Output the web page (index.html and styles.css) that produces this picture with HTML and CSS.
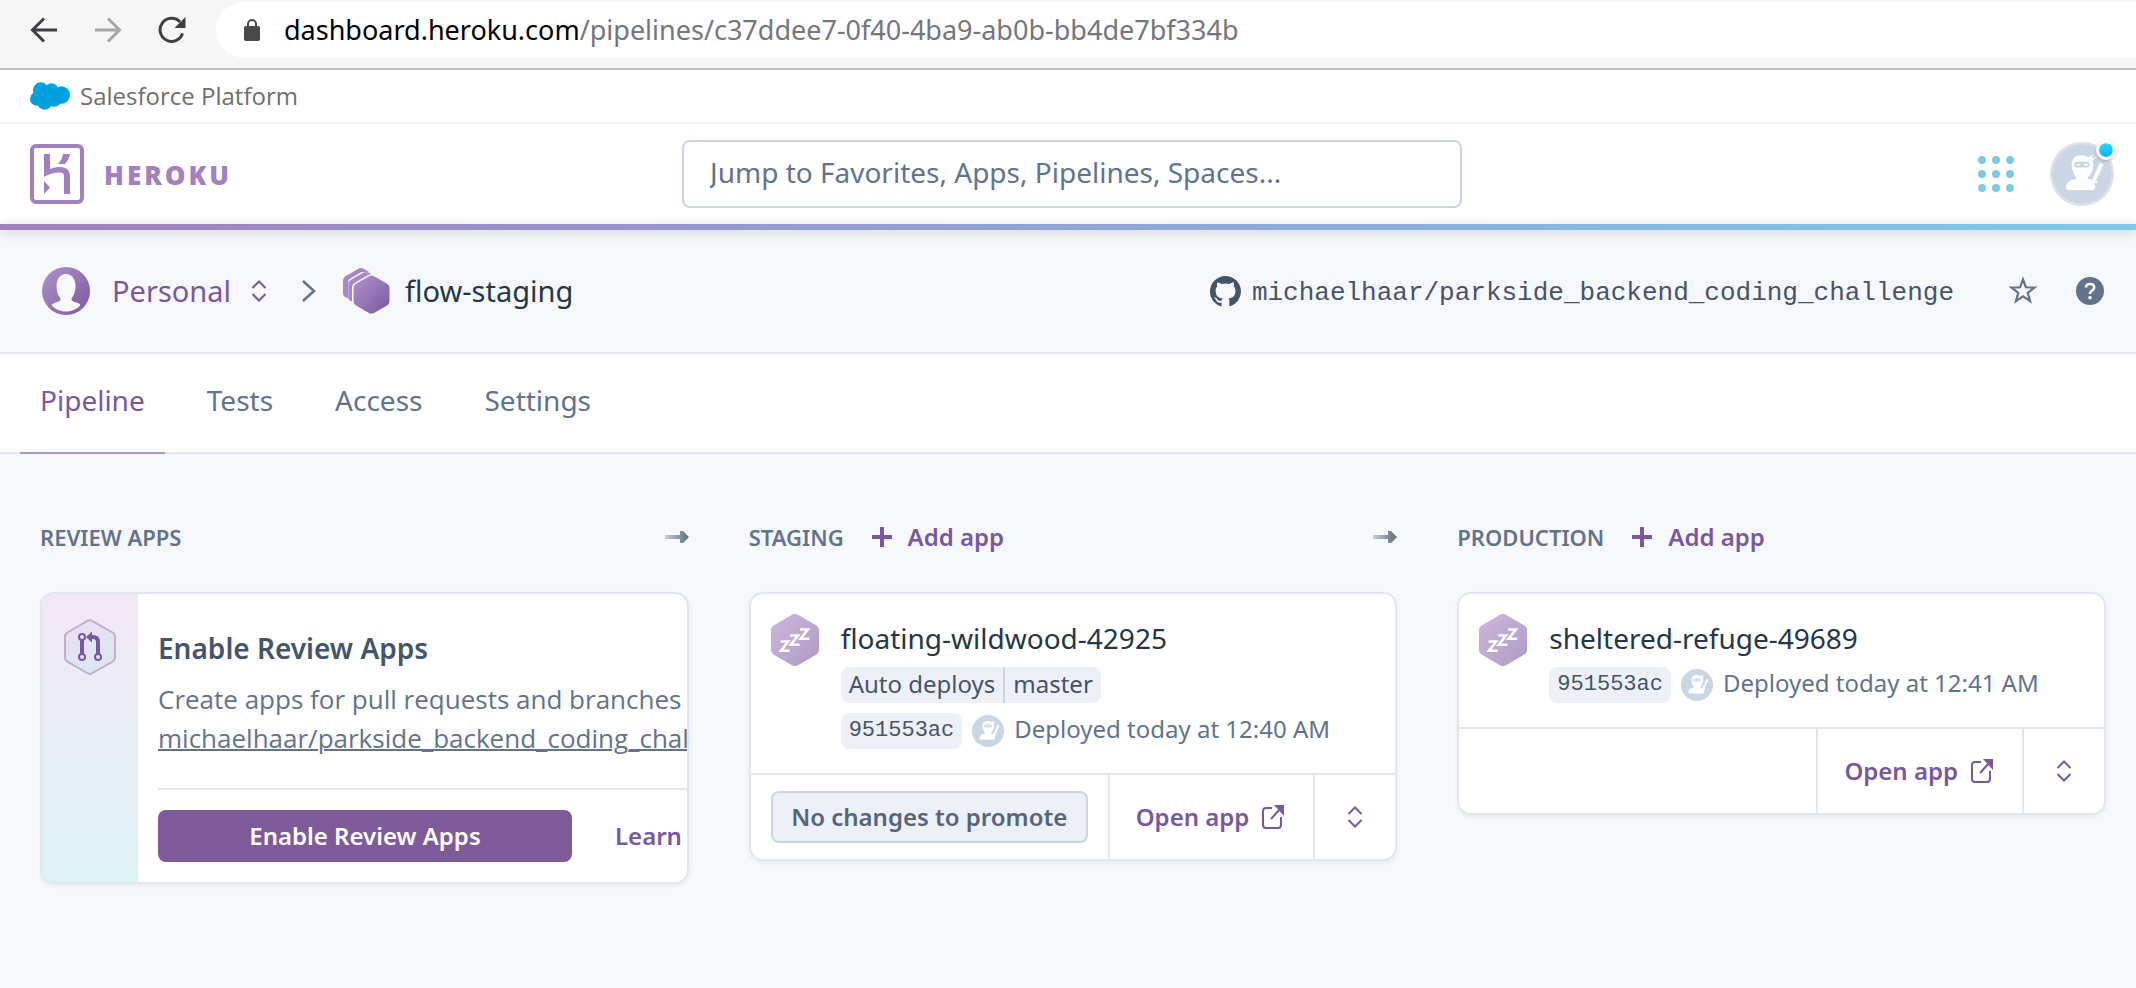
FILE: index.html
```html
<!DOCTYPE html>
<html lang="en">
<head>
<meta charset="utf-8">
<title>flow-staging | Heroku</title>
<link rel="stylesheet" href="styles.css">
</head>
<body>
<svg class="defs" aria-hidden="true">
  <defs>
    <linearGradient id="purple" x1="0" y1="0" x2="1" y2="1"><stop offset="0" stop-color="#b093cd"/><stop offset="1" stop-color="#79589f"/></linearGradient>
    <linearGradient id="lilac" x1="0" y1="0" x2="1" y2="1"><stop offset="0" stop-color="#ccb8dc"/><stop offset="1" stop-color="#af9ac5"/></linearGradient>
    <linearGradient id="pale" x1="0" y1="0" x2="1" y2="1"><stop offset="0" stop-color="#ecdff2"/><stop offset="1" stop-color="#d9e8f4"/></linearGradient>
    <linearGradient id="fade" x1="0" y1="0" x2="1" y2="0"><stop offset="0" stop-color="#5f6b7c" stop-opacity=".3"/><stop offset="1" stop-color="#5f6b7c"/></linearGradient>
    <symbol id="ninja" viewBox="0 0 64 64">
      <circle cx="32" cy="32" r="32" fill="#cbd6e5"/>
      <path fill="#fff" d="M15 46c0-5 4-8 11-9v-1c-3-4-5-9-5-14 0-7 5-10 11-10 3 0 5 1 7 2l5-3-2 4 5-1-4 4c1 1 1 3 1 4 0 5-2 10-6 14v1c2 0 4 1 5 1l8-18 4 2-8 17 2 1-1 2-2-1-1 2c1 1 1 2 1 4 0 1-1 2-2 2H17c-1 0-2-1-2-2z"/>
      <rect x="24" y="19" width="16" height="6" rx="3" fill="#cbd6e5"/>
      <ellipse cx="28" cy="22" rx="2" ry="1" fill="#fff"/><ellipse cx="36" cy="22" rx="2" ry="1" fill="#fff"/>
    </symbol>
    <symbol id="updown" viewBox="0 0 16 22"><path d="M1.500 8 8 1.500 14.500 8M1.500 14 8 20.500 14.500 14" fill="none" stroke="currentColor" stroke-width="2"/></symbol>
    <symbol id="external" viewBox="0 0 24 26"><path d="M11 4H5a3 3 0 0 0-3 3v14a3 3 0 0 0 3 3h12a3 3 0 0 0 3-3V13M10 15 19 5" fill="none" stroke="currentColor" stroke-width="2"/><path d="M13 1h10v11z" fill="currentColor"/></symbol>
    <symbol id="arrow" viewBox="0 0 24 14"><path d="M0 5h15V1l3 0 6 6-6 6-3 0V9H0z" fill="url(#fade)"/></symbol>
    <symbol id="plus" viewBox="0 0 20 20"><path d="M8 0h4v8h8v4h-8v8H8v-8H0V8h8z" fill="currentColor"/></symbol>
    <symbol id="sleep" viewBox="0 0 48 52">
      <path d="M21 .8a6 6 0 0 1 6 0l18 10.500a6 6 0 0 1 3 5.200v19a6 6 0 0 1-3 5.200L27 51.200a6 6 0 0 1-6 0L3 40.700a6 6 0 0 1-3-5.200v-19a6 6 0 0 1 3-5.200z" fill="url(#lilac)"/>
      <path d="M9.500 27.500h7.700L10 36.700h8.700M19.300 21.500H27l-7.200 9.200h8.700M29.100 15.500h7.700l-7.200 9.200h8.700" fill="none" stroke="#fff" stroke-width="2.600"/>
    </symbol>
    <path id="hex" d="M15.500.8a5 5 0 0 1 5 0l13 7.500A5 5 0 0 1 36 12.600v13a5 5 0 0 1-2.500 4.300l-13 7.500a5 5 0 0 1-5 0l-13-7.500A5 5 0 0 1 0 25.600v-13a5 5 0 0 1 2.500-4.300z"/>
    <clipPath id="left"><path d="M0 0h48v14L11 33 0 28z"/></clipPath>
  </defs>
</svg>

<div class="browser">
  <button class="nav" aria-label="Back"><svg width="28" height="28" viewBox="0 0 28 28"><path d="M27 14H3M14 2.500 2.500 14 14 25.500" fill="none" stroke="#3d3f42" stroke-width="3"/></svg></button>
  <button class="nav" aria-label="Forward"><svg width="28" height="28" viewBox="0 0 28 28"><path d="M1 14h24M14 2.500 25.500 14 14 25.500" fill="none" stroke="#a5a6a8" stroke-width="3"/></svg></button>
  <button class="nav" aria-label="Reload"><svg width="28" height="28" viewBox="0 0 28 28"><path d="M24.500 17.500A11.500 11.500 0 1 1 22 6" fill="none" stroke="#3d3f42" stroke-width="3"/><path d="M27.500 1v11h-11z" fill="#3d3f42"/></svg></button>
  <div class="address">
    <svg width="16" height="22" viewBox="0 0 16 22"><path d="M4 9V5a4 4 0 0 1 8 0v4" fill="none" stroke="#4a4a4a" stroke-width="2"/><rect y="7" width="16" height="15" rx="2" fill="#4a4a4a"/></svg>
    <span class="url"><span class="host">dashboard.heroku.com</span>/pipelines/c37ddee7-0f40-4ba9-ab0b-bb4de7bf334b</span>
  </div>
</div>

<div class="platform">
  <svg width="40" height="28" viewBox="0 0 41 28"><g fill="#00a1e0"><circle cx="11" cy="8" r="8"/><circle cx="22" cy="8" r="7"/><circle cx="32" cy="13" r="9"/><circle cx="7" cy="17" r="7"/><circle cx="15" cy="20" r="8"/><circle cx="25" cy="18" r="7"/></g></svg>
  <span>Salesforce Platform</span>
</div>

<header class="header">
  <a class="brand" href="#" aria-label="Heroku">
    <svg width="54" height="60" viewBox="0 0 54 60"><rect x="2" y="2" width="50" height="56" rx="4" fill="none" stroke="#a181bf" stroke-width="4"/><path fill="#a181bf" d="M14 10h6v15c4-1.500 7-2 10-2 7 0 10 4 10 9v18h-6V32c0-2-1-3.500-4-3.500-6 0-12 2-16 4.500zM14 37l6 6.500-6 6.500zM33 10h7c-.5 4-2.500 7-5 10h-7c2.500-3 4.500-6 5-10z"/></svg>
    <span>HEROKU</span>
  </a>
  <input class="search" type="text" aria-label="Search" placeholder="Jump to Favorites, Apps, Pipelines, Spaces...">
  <div class="account">
    <button class="plain" aria-label="Apps"><svg width="36" height="36" viewBox="0 0 36 36"><g fill="#7fc9e6"><circle cx="4" cy="4" r="4"/><circle cx="18" cy="4" r="4"/><circle cx="32" cy="4" r="4"/><circle cx="4" cy="18" r="4"/><circle cx="18" cy="18" r="4"/><circle cx="32" cy="18" r="4"/><circle cx="4" cy="32" r="4"/><circle cx="18" cy="32" r="4"/><circle cx="32" cy="32" r="4"/></g></svg></button>
    <button class="plain avatar" aria-label="Account"><svg width="60" height="60"><use href="#ninja"/></svg><i class="dot"></i></button>
  </div>
</header>
<div class="rainbow"></div>

<section class="context">
  <button class="plain owner">
    <svg width="48" height="48" viewBox="0 0 48 48"><circle cx="24" cy="24" r="24" fill="url(#purple)"/><path fill="#f7f8fc" d="M24 7c6 0 9.500 5 9.500 12 0 6-2 10-4 12.500 0 2 .5 2.500 3 3.500 3 .8 5 1.500 6 3-3 4-8.500 6.500-14.500 6.500S12.500 42 9.500 38c1-1.500 3-2.200 6-3 2.500-1 3-1.500 3-3.500-2-2.500-4-6.500-4-12.500 0-7 3.500-12 9.500-12z"/></svg>
    <span>Personal</span>
    <svg width="16" height="22"><use href="#updown"/></svg>
  </button>
  <svg class="chevron" width="16" height="22" viewBox="0 0 16 22"><path d="M2 1l11 10L2 21" fill="none" stroke="#62738d" stroke-width="2.500"/></svg>
  <svg width="47" height="46" viewBox="0 0 47 46">
    <g fill="#a788c6" stroke="#f7f8fc" stroke-width="3" paint-order="stroke">
      <g clip-path="url(#left)"><use href="#hex"/></g>
      <g transform="translate(5.200 3.800)"><g clip-path="url(#left)"><use href="#hex"/></g></g>
      <use href="#hex" x="10.500" y="7.500" fill="url(#purple)"/>
    </g>
  </svg>
  <h1 class="name">flow-staging</h1>
  <a class="repo" href="#">
    <svg width="31" height="31" viewBox="0 0 16 16"><path fill="#45546b" d="M8 0C3.580 0 0 3.580 0 8c0 3.540 2.290 6.530 5.470 7.590.4.070.55-.17.55-.38 0-.19-.01-.82-.01-1.490-2.010.37-2.530-.49-2.690-.94-.09-.23-.48-.94-.82-1.130-.28-.15-.68-.52-.01-.53.63-.01 1.080.58 1.230.82.72 1.210 1.870.87 2.330.66.07-.52.28-.87.51-1.070-1.780-.2-3.640-.89-3.640-3.950 0-.87.31-1.590.82-2.150-.08-.2-.36-1.020.08-2.120 0 0 .67-.21 2.200.82.64-.18 1.320-.27 2-.27s1.360.09 2 .27c1.530-1.040 2.200-.82 2.200-.82.44 1.100.16 1.920.08 2.120.51.56.82 1.270.82 2.150 0 3.070-1.870 3.750-3.650 3.950.29.25.54.73.54 1.480 0 1.070-.01 1.930-.01 2.200 0 .21.15.46.55.38A8.010 8.010 0 0 0 16 8c0-4.420-3.580-8-8-8z"/></svg>
    <span>michaelhaar/parkside_backend_coding_challenge</span>
  </a>
  <button class="plain star" aria-label="Favorite"><svg width="30" height="30" viewBox="0 0 30 30"><path d="M15 3.500l2.900 7.800 8.600.3-6.800 5.200 2.400 8.400-7.100-4.900-7.100 4.900 2.400-8.400L3.500 11.600l8.600-.3z" fill="none" stroke="#62738d" stroke-width="2.200"/></svg></button>
  <button class="plain help" aria-label="Help"><svg width="28" height="28" viewBox="0 0 28 28"><circle cx="14" cy="14" r="14" fill="#62738d"/><path d="M10 10.500c0-2.400 1.800-3.500 4-3.500s4.200 1.200 4.200 3.500c0 3-4.200 3-4.200 6.500" fill="none" stroke="#fff" stroke-width="2.600"/><circle cx="14" cy="20.800" r="1.800" fill="#fff"/></svg></button>
</section>

<nav class="tabs">
  <a class="tab active" href="#">Pipeline</a>
  <a class="tab" href="#">Tests</a>
  <a class="tab" href="#">Access</a>
  <a class="tab" href="#">Settings</a>
</nav>

<main class="stages">
  <section class="stage">
    <div class="stage-head"><h2>REVIEW APPS</h2><svg class="next" width="24" height="14"><use href="#arrow"/></svg></div>
    <article class="card review">
      <div class="strip"><svg width="54" height="60" viewBox="0 0 54 60"><path d="M24 3.200a5 5 0 0 1 5.500 0L49.500 14.500a5 5 0 0 1 2.500 4.300v20.500a5 5 0 0 1-2.500 4.300L29.500 55a5 5 0 0 1-5.500 0L4.500 43.600A5 5 0 0 1 2 39.300V18.800a5 5 0 0 1 2.500-4.300z" fill="url(#pale)" stroke="#c0b0d0" stroke-width="2"/><g fill="none" stroke="#79589f"><circle cx="19" cy="19" r="3" stroke-width="2"/><circle cx="19" cy="39" r="3" stroke-width="2"/><circle cx="35" cy="39" r="3" stroke-width="2"/><path d="M19 22v14M35 36V24q0-5-5-5h-2" stroke-width="4"/></g><path d="M23 19l6-5.500v11z" fill="#79589f"/></svg></div>
      <div class="review-body">
        <h3>Enable Review Apps</h3>
        <p>Create apps for pull requests and branches on<br><a href="#">michaelhaar/parkside_backend_coding_challenge</a></p>
        <div class="review-actions"><button class="primary">Enable Review Apps</button><a href="#">Learn More</a></div>
      </div>
    </article>
  </section>

  <section class="stage">
    <div class="stage-head"><h2>STAGING</h2><button class="plain add"><svg width="20" height="20"><use href="#plus"/></svg>Add app</button><svg class="next" width="24" height="14"><use href="#arrow"/></svg></div>
    <article class="card">
      <div class="app">
        <svg width="48" height="52"><use href="#sleep"/></svg>
        <div class="info">
          <h3>floating-wildwood-42925</h3>
          <div class="row"><span class="tag">Auto deploys</span><span class="tag">master</span></div>
          <div class="row"><code class="tag">951553ac</code><svg class="who" width="32" height="32"><use href="#ninja"/></svg><span class="when">Deployed today at 12:40 AM</span></div>
        </div>
      </div>
      <div class="foot">
        <div class="promote"><button class="muted" disabled>No changes to promote</button></div>
        <a class="open" href="#">Open app<svg width="24" height="26"><use href="#external"/></svg></a>
        <button class="plain more" aria-label="More"><svg width="16" height="22"><use href="#updown"/></svg></button>
      </div>
    </article>
  </section>

  <section class="stage">
    <div class="stage-head"><h2>PRODUCTION</h2><button class="plain add"><svg width="20" height="20"><use href="#plus"/></svg>Add app</button></div>
    <article class="card">
      <div class="app">
        <svg width="48" height="52"><use href="#sleep"/></svg>
        <div class="info">
          <h3>sheltered-refuge-49689</h3>
          <div class="row"><code class="tag">951553ac</code><svg class="who" width="32" height="32"><use href="#ninja"/></svg><span class="when">Deployed today at 12:41 AM</span></div>
        </div>
      </div>
      <div class="foot">
        <div class="promote"></div>
        <a class="open" href="#">Open app<svg width="24" height="26"><use href="#external"/></svg></a>
        <button class="plain more" aria-label="More"><svg width="16" height="22"><use href="#updown"/></svg></button>
      </div>
    </article>
  </section>
</main>
</body>
</html>
```
FILE: styles.css
```css
* { box-sizing: border-box; }
body { margin: 0; min-height: 100vh; background: #f7f8fc; color: #62738d; font: 24px/32px "Noto Sans", "Open Sans", sans-serif; }
h1, h2, h3, p { margin: 0; font-weight: 400; }
a { text-decoration: none; color: inherit; }
svg { display: block; flex: none; }
button, input { font: inherit; }
.defs { position: absolute; width: 0; height: 0; }
.plain, .nav { border: 0; padding: 0; background: none; color: inherit; display: flex; align-items: center; flex: none; }

.browser { display: flex; align-items: flex-start; height: 70px; padding: 2px 0 0 30px; background: #f6f6f7; border-bottom: 2px solid #bfbfbf; }
.nav { height: 56px; margin-right: 36px; }
.address { flex: 1; display: flex; align-items: center; gap: 24px; height: 56px; margin-left: -6px; padding-left: 28px; border-radius: 28px 0 0 28px; background: #fff; }
.url { color: #74777b; font-size: 27px; line-height: 40px; }
.host { color: #000; }

.platform { display: flex; align-items: center; gap: 10px; height: 54px; padding-left: 30px; background: #fff; border-bottom: 2px solid #edf1f6; color: #706e6b; font-family: "Open Sans", sans-serif; }

.header { display: grid; grid-template-columns: 1fr 780px 1fr; align-items: center; height: 100px; padding: 0 22px 0 30px; background: #fff; }
.brand { display: flex; align-items: center; gap: 20px; color: #a181bf; font: 800 26px/32px "Open Sans", sans-serif; letter-spacing: 3px; }
.brand span { padding-top: 2px; }
.search { height: 68px; width: 100%; padding: 0 26px 4px; border: 2px solid #cbd6e5; border-radius: 8px; background: #fff; font-size: 28px; color: #45546b; }
.search::placeholder { color: #62738d; opacity: 1; }
.account { display: flex; align-items: center; justify-content: flex-end; gap: 36px; }
.avatar { position: relative; border: 2px solid #dfe0e6; border-radius: 50%; }
.dot { position: absolute; top: -4px; right: -4px; width: 20px; height: 20px; border: 3px solid #fff; border-radius: 50%; background: linear-gradient(#2fd6f5, #00b8ff) padding-box; box-shadow: 0 1px 3px #0004; }
.rainbow { height: 6px; background: linear-gradient(90deg, #a37fbd, #7ecae8); box-shadow: 0 2px 12px #0003; }

.context { display: flex; align-items: center; height: 124px; padding: 0 32px 0 42px; border-bottom: 2px solid #e3e8ee; font-size: 29px; line-height: 40px; }
.owner { color: #79589f; }
.owner span { margin: 0 20px 0 22px; }
.chevron { margin: 0 26px 0 34px; }
.name { margin-left: 15px; font-size: 29px; color: #253746; }
.repo { display: flex; align-items: center; gap: 11px; margin-left: auto; color: #45546b; font: 26px/32px "Liberation Mono", monospace; }
.repo span { padding-top: 4px; }
.star { margin-left: 54px; }
.help { margin-left: 38px; }

.tabs { display: flex; height: 100px; padding-left: 20px; background: #fff; border-bottom: 2px solid #e3e8ee; font-size: 28px; line-height: 36px; }
.tab { height: 100px; margin-right: 22px; padding: 28px 20px 0; }
.active { color: #79589f; border-bottom: 2px solid #ab98c1; }

.stages { display: grid; grid-template-columns: repeat(3, minmax(0, 1fr)); gap: 60px; align-items: start; padding: 63px 30px 64px 40px; }
.stage-head { display: flex; align-items: center; height: 40px; margin-bottom: 35px; }
.stage-head h2 { font-size: 22px; font-weight: 600; }
.add { gap: 16px; margin-left: 28px; color: #79589f; font-weight: 600; }
.next { margin-left: auto; }
.card { border: 2px solid #e2e6ee; border-radius: 14px; background: #fff; box-shadow: 0 2px 5px #0000000f; overflow: hidden; }

.review { display: flex; height: 292px; }
.strip { flex: none; width: 96px; padding: 24px 0 0 21px; background: linear-gradient(#f2e8f5, #def3f6); }
.review-body { flex: none; width: 620px; padding: 35px 0 0 20px; white-space: nowrap; }
.review h3 { font-size: 28px; line-height: 38px; font-weight: 600; color: #45546b; }
.review p { margin-top: 13px; font-family: "Open Sans", sans-serif; font-size: 26px; line-height: 39px; }
.review p a { text-decoration: underline; text-decoration-thickness: 2px; }
.review-actions { display: flex; align-items: center; gap: 43px; margin-top: 30px; padding-top: 20px; border-top: 2px solid #e2e6ee; color: #79589f; font-weight: 600; }
.primary { width: 414px; height: 52px; border: 0; border-radius: 8px; background: #7e5a9b; color: #fff; font-weight: 600; }

.app { display: flex; gap: 22px; padding: 20px 20px 24px; }
.info h3 { margin-top: 5px; font-size: 28px; line-height: 38px; color: #253746; }
.row { display: flex; align-items: center; height: 36px; margin-top: 10px; }
.tag { height: 36px; padding: 0 8px; border-radius: 8px; background: #edf0f6; color: #45546b; font-size: 24px; line-height: 34px; }
.tag + .tag { border-left: 2px solid #cbd6e5; border-radius: 0 8px 8px 0; }
.tag:has(+ .tag) { border-radius: 8px 0 0 8px; }
code.tag { font-family: "Liberation Mono", monospace; font-size: 22px; line-height: 36px; }
.who { margin: 0 10px; }
.when { padding-bottom: 4px; }
.foot { display: flex; border-top: 2px solid #e2e6ee; height: 86px; color: #79589f; font-weight: 600; }
.promote { flex: 1; display: flex; align-items: center; padding: 0 20px; }
.muted { flex: 1; height: 52px; padding: 0; border: 2px solid #cbd6e5; border-radius: 8px; background: #edf0f6; color: #55657d; font-weight: 600; white-space: nowrap; }
.open { display: flex; align-items: center; gap: 12px; padding: 0 28px 0 26px; border-left: 2px solid #e2e6ee; }
.more { width: 82px; justify-content: center; border-left: 2px solid #e2e6ee; }
```
